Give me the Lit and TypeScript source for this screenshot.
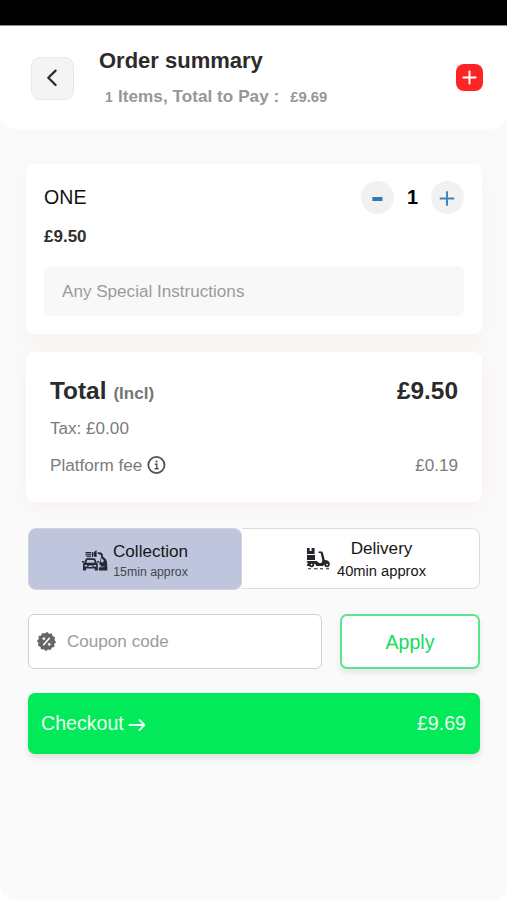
import { LitElement, html, css } from "lit";
import { customElement, property, state } from "lit/decorators.js";

const money = (n: number) => `£${n.toFixed(2)}`;

@customElement("order-header")
class OrderHeader extends LitElement {
  @property({ type: Number }) count = 1;
  @property({ type: Number }) total = 0;

  static styles = css`
    :host { display: block; }
    .bar {
      display: flex; align-items: flex-start; box-sizing: border-box; height: 104px;
      padding: 0 24px 0 31px; background: #fff; border-radius: 0 0 16px 16px;
      border-top: 1px solid #8c8c8c;
    }
    .back {
      box-sizing: border-box; width: 43px; height: 43px; margin-top: 31px; padding: 0;
      border: 1px solid #e8e8e8; border-radius: 9px; background: #f4f4f4;
      display: grid; place-items: center;
    }
    .titles { flex: 1; margin: 22px 0 0 25px; }
    .title { margin: 0; font-size: 22px; line-height: 26px; font-weight: 700; color: #2b2b2b; }
    .sub {
      display: flex; align-items: baseline; margin: 12px 0 0 5px; white-space: pre;
      font-size: 17.1px; line-height: 22px; font-weight: 700; color: #96969b;
    }
    .n { font-size: 14px; width: 14px; padding-left: 1px; box-sizing: border-box; }
    .items { letter-spacing: 0.05px; }
    .sum { font-size: 14.8px; margin-left: 11px; }
    .add {
      width: 27px; height: 27px; margin-top: 38px; padding: 0; border: 0; border-radius: 8px;
      background: #fe2424; display: grid; place-items: center;
    }
    svg { display: block; }
  `;

  render() {
    return html`
      <header class="bar">
        <button class="back" aria-label="Back">
          <svg width="21" height="21" viewBox="0 0 21 21" fill="none" stroke="#2b2b2b" stroke-width="2.3" stroke-linecap="round" stroke-linejoin="round"><path d="M13.6 2.6 6.3 9.8l7.3 7.2" /></svg>
        </button>
        <div class="titles">
          <h1 class="title">Order summary</h1>
          <div class="sub"><span class="n">${this.count}</span><span class="items">Items, Total to Pay :</span><span class="sum">${money(this.total)}</span></div>
        </div>
        <button class="add" aria-label="Add items">
          <svg width="15" height="15" viewBox="0 0 15 15" stroke="#fff" stroke-width="2" stroke-linecap="round"><path d="M7.5 1.4v12.2M1.4 7.5h12.2" /></svg>
        </button>
      </header>
    `;
  }
}

@customElement("order-item")
class OrderItem extends LitElement {
  @property() name = "";
  @property({ type: Number }) price = 0;
  @property({ type: Number }) quantity = 1;

  static styles = css`
    :host {
      display: block; box-sizing: border-box; height: 170px; padding: 17px 18px 0; margin: 0 25px 0 26px;
      background: #fff; border-radius: 8px; box-shadow: 0 8px 18px rgba(240, 130, 100, 0.07);
    }
    .top { display: flex; align-items: center; height: 33px; }
    .name { flex: 1; font-size: 19.6px; color: #111; }
    .round {
      width: 33px; height: 33px; border: 0; padding: 0; border-radius: 50%; background: #f1f1f1;
      display: grid; place-items: center;
    }
    .round svg { display: block; }
    .qty { width: 37px; text-align: center; font-size: 20px; font-weight: 700; color: #000; }
    .price { margin-top: 11px; font-size: 17px; line-height: 24px; font-weight: 700; color: #2f2f2f; }
    .note {
      display: block; box-sizing: border-box; width: 100%; height: 50px; margin-top: 17px; padding: 1px 18px 0;
      border: 0; border-radius: 6px; background: #f8f8f8; font: 17.1px "Liberation Sans", sans-serif;
    }
    .note::placeholder { color: #9b9b9b; opacity: 1; }
  `;

  render() {
    return html`
      <div class="top">
        <span class="name">${this.name}</span>
        <button class="round" aria-label="Remove one">
          <svg width="33" height="33"><path d="M11.3 18h10.2" stroke="#3478b0" stroke-width="4" /></svg>
        </button>
        <span class="qty">${this.quantity}</span>
        <button class="round" aria-label="Add one">
          <svg width="33" height="33"><path d="M8.8 17.5h14.4M16 10.3v14.4" stroke="#4584b8" stroke-width="2" /></svg>
        </button>
      </div>
      <div class="price">${money(this.price)}</div>
      <input class="note" placeholder="Any Special Instructions" />
    `;
  }
}

@customElement("order-totals")
class OrderTotals extends LitElement {
  @property({ type: Number }) subtotal = 0;
  @property({ type: Number }) tax = 0;
  @property({ type: Number }) fee = 0;

  static styles = css`
    :host {
      display: block; box-sizing: border-box; height: 150px; margin: 18px 25px 0 26px; padding: 24px 24px 0;
      background: #fff; border-radius: 8px; box-shadow: 0 4px 18px rgba(240, 130, 100, 0.09);
      font-size: 17.1px; color: #7b7b7b;
    }
    .row { display: flex; justify-content: space-between; align-items: center; height: 24px; }
    .total { height: 30px; align-items: baseline; line-height: 30px; font-weight: 700; font-size: 24.4px; color: #2b2b2b; }
    .incl { font-size: 17px; color: #757575; margin-left: 7px; }
    .tax { margin-top: 11px; }
    .fee { margin-top: 13px; }
    .label { display: flex; align-items: center; gap: 4px; }
    svg { display: block; }
  `;

  render() {
    return html`
      <div class="row total"><span>Total<span class="incl">(Incl)</span></span><span>${money(this.subtotal)}</span></div>
      <div class="row tax">Tax: ${money(this.tax)}</div>
      <div class="row fee">
        <span class="label">Platform fee
          <svg width="21" height="20" viewBox="0 0 21 20" fill="none" stroke="#505050">
            <circle cx="10.4" cy="9" r="8.1" stroke-width="1.8" />
            <path d="M8.8 8.2h2v4.6M8.5 12.8h4.2" stroke-width="1.4" />
            <circle cx="10.6" cy="5.5" r="1.1" fill="#505050" stroke="none" />
          </svg>
        </span>
        <span>${money(this.fee)}</span>
      </div>
    `;
  }
}

@customElement("fulfilment-toggle")
class FulfilmentToggle extends LitElement {
  static styles = css`
    :host { display: block; margin: 26px 27px 0 28px; }
    .group { display: grid; grid-template-columns: 214px 1fr; height: 62px; }
    .option {
      display: flex; align-items: center; box-sizing: border-box; color: #161616; padding: 0;
      font-family: inherit; text-align: center; white-space: nowrap;
    }
    .collection {
      background: #bec5dc; border: 1px solid #d0d3df; border-radius: 8px; padding-left: 53px; gap: 4px; height: 62px;
    }
    .delivery {
      background: #fff; border: 1px solid #dcdcdc; border-left: 0; border-radius: 0 8px 8px 0;
      padding-left: 64px; gap: 5px; height: 61px;
    }
    .name { font-size: 17.1px; line-height: 20px; }
    .collection .time { font-size: 12.3px; line-height: 20px; color: #43464f; }
    .collection .text { padding-top: 6px; }
    .collection svg { margin-top: 3px; }
    .delivery .time { font-size: 14.7px; line-height: 20px; margin-top: 2px; }
    .delivery .text { padding-top: 2px; }
    svg { display: block; }
  `;

  render() {
    return html`
      <div class="group">
        <button class="option collection">
          <svg width="27" height="26" viewBox="0 0 27 26" fill="#252936">
            <path d="M3.5 4h5.5v1.4H3.5zM3.5 6.2h5.5v1.4H3.5zM4.5 8.3H9v1H4.5z" />
            <path d="M9.8 4h1.2v5H9.8zM11.5 4.5 14.6 2v7h-1.4l-1.7-1z" />
            <path fill-rule="evenodd" d="M3.6 11.2q.3-1 1.4-1h7q1.1 0 1.5 1l1.2 3.6q1.1.4 1.1 1.6v6h-3v-1.8H4v1.8H1v-6q0-1.2 1.1-1.6zM5.2 12l-1 2.8h8.6l-1-2.8zM2.7 17v1.5h2.6V17zM11.5 17v1.5h2.6V17zM6.5 17.4v1.6h4v-1.6z" />
            <path d="M0 13h2v1.4H0zM15 13h2v1.4h-2z" />
            <path d="M15.6 4.2q4.8-.4 5.2 2.4l.3 2.1q3.3 2 3.9 5l.4 8.9h-8.4q-.9-1.4 0-3.1l2.6-1.4-2.5-1.9 1.4-4.9.8-3.2q-.6-2.3-3.7-2.4z" />
            <path d="m19.6 10.3 1.9 2.3-.6 1.8-2-1zM18.5 19.4l4-1" fill="#bec5dc" stroke="#bec5dc" stroke-width=".5" />
          </svg>
          <span class="text"><div class="name">Collection</div><div class="time">15min approx</div></span>
        </button>
        <button class="option delivery">
          <svg width="26" height="24" viewBox="0 0 26 24" fill="#24262b">
            <path d="M1 1h2.6v3h2V1h3v6H1zM1 8h8v5H1z" />
            <path d="M.5 14h10.2l2.4 2h2.3l1-2.4-1.8-7.5h-2.1V4.6h3.4q.8.3 1 1.3l1.9 7.2q3.8 0 5.2 3.4h-4q-1.9.3-2.9 2.5h-6.8q-.5-2.4-3.3-2.4-2.4 0-3.1 2.4H.8l1-3z" />
            <circle cx="5.5" cy="17.6" r="2.7" /><circle cx="21" cy="17.6" r="2.7" />
            <circle cx="5.5" cy="17.6" r=".9" fill="#fff" /><circle cx="21" cy="17.6" r=".9" fill="#fff" />
            <path d="M2 21.3h3v.9H2zM8 21.3h3.5v.9H8zM14 21.3h3v.9h-3zM20 21.3h3v.9h-3z" />
          </svg>
          <span class="text"><div class="name">Delivery</div><div class="time">40min approx</div></span>
        </button>
      </div>
    `;
  }
}

@customElement("checkout-panel")
class CheckoutPanel extends LitElement {
  @property({ type: Number }) total = 0;

  static styles = css`
    :host { display: block; margin: 24px 27px 0 28px; }
    .coupon { display: flex; gap: 18px; height: 55px; }
    .field {
      flex: 1; display: flex; align-items: center; box-sizing: border-box; padding-left: 8px; gap: 11px;
      background: #fff; border: 1px solid #cfcfcf; border-radius: 6px;
    }
    .code { width: 220px; border: 0; padding: 0; background: none; font: 17.1px "Liberation Sans", sans-serif; }
    .code::placeholder { color: #9b9b9b; opacity: 1; }
    .apply {
      width: 140px; box-sizing: border-box; border: 2px solid #5ce48f; border-radius: 7px; background: #fff;
      color: #14dc5c; font: 19.5px "Liberation Sans", sans-serif; padding: 1px 0 0; box-shadow: 0 4px 6px rgba(0, 0, 0, 0.08);
    }
    .checkout {
      display: flex; align-items: center; box-sizing: border-box; width: 100%; height: 61px; margin-top: 24px;
      padding: 0 14px 0 13px; border: 0; border-radius: 7px; background: #02e959; color: #e9fff0;
      font: 19.6px "Liberation Sans", sans-serif; box-shadow: 0 4px 6px rgba(0, 0, 0, 0.1);
    }
    .arrow { margin: 2px 0 0 4px; }
    .sum { margin-left: auto; }
    svg { display: block; flex: none; }
  `;

  private teeth() {
    const points: string[] = [];
    for (let i = 0; i < 48; i++) {
      const r = i % 4 < 2 ? 9.8 : 8.7;
      const a = (i / 48) * Math.PI * 2;
      points.push(`${(10 + r * Math.cos(a)).toFixed(2)},${(10 + r * Math.sin(a)).toFixed(2)}`);
    }
    return points.join(" ");
  }

  render() {
    return html`
      <div class="coupon">
        <label class="field">
          <svg width="19" height="19" viewBox="0 0 20 20">
            <polygon points=${this.teeth()} fill="#656565" />
            <g fill="none" stroke="#fff"><path d="m13.4 6-6.8 8" stroke-width="1.6" /><circle cx="7.2" cy="7" r="1.2" fill="#fff" stroke-width=".5" /><circle cx="12.9" cy="13" r="1.2" fill="#fff" stroke-width=".5" /></g>
          </svg>
          <input class="code" placeholder="Coupon code" />
        </label>
        <button class="apply">Apply</button>
      </div>
      <button class="checkout">
        <span>Checkout</span>
        <svg class="arrow" width="18" height="14" viewBox="0 0 18 14" fill="none" stroke="#e9fff0" stroke-width="1.8" stroke-linecap="round" stroke-linejoin="round"><path d="M1.5 7h15M11.5 2l5 5-5 5" /></svg>
        <span class="sum">${money(this.total)}</span>
      </button>
    `;
  }
}

@customElement("app-root")
class AppRoot extends LitElement {
  @state() private price = 9.5;
  @state() private fee = 0.19;

  static styles = css`
    :host {
      display: block; height: 900px; background: #fff; overflow: hidden;
      font-family: "Liberation Sans", Arial, sans-serif;
    }
    .status { height: 25px; background: #000; }
    .page { height: 875px; background: #fafafa; border-radius: 0 0 16px 16px; }
    .content { display: block; padding-top: 35px; }
  `;

  render() {
    return html`
      <div class="status"></div>
      <main class="page">
        <order-header .count=${1} .total=${this.price + this.fee}></order-header>
        <div class="content">
          <order-item .name=${"ONE"} .price=${this.price} .quantity=${1}></order-item>
          <order-totals .subtotal=${this.price} .tax=${0} .fee=${this.fee}></order-totals>
          <fulfilment-toggle></fulfilment-toggle>
          <checkout-panel .total=${this.price + this.fee}></checkout-panel>
        </div>
      </main>
    `;
  }
}
